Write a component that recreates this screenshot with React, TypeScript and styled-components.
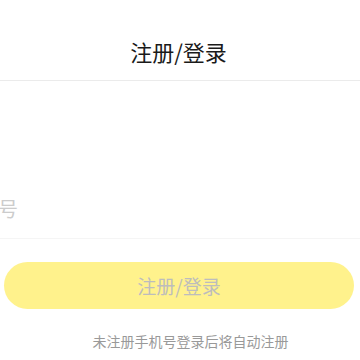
import React from "react";
import styled, { createGlobalStyle } from "styled-components";

const Global = createGlobalStyle`
  html, body { margin: 0; padding: 0; background: #ffffff; }
  body { font-family: "Noto Sans CJK SC", "Noto Sans", sans-serif; }
  * { box-sizing: border-box; }
`;

const Page = styled.div`
  width: 360px;
  height: 360px;
  overflow: hidden;
  display: flex;
  flex-direction: column;
`;

const Header = styled.header`
  height: 81px;
  padding-top: 31px;
  padding-right: 3px;
  border-bottom: 1px solid #ebebeb;
  text-align: center;
  font-size: 22px;
  line-height: 40px;
  color: #1a1a1a;
`;

const Form = styled.div`
  display: flex;
  flex-direction: column;
  padding-top: 97px;
`;

const InputRow = styled.div`
  height: 61px;
  border-bottom: 1px solid #f5f5f5;
  overflow: hidden;
  display: flex;
  align-items: center;
`;

const PhoneInput = styled.input`
  flex: none;
  width: 480px;
  margin-left: -102px;
  border: none;
  outline: none;
  background: transparent;
  padding: 0;
  height: 40px;
  font-family: "Noto Sans CJK SC", "Noto Sans", sans-serif;
  font-size: 20px;
  color: #333;
  &::placeholder { color: #cccccc; }
`;

const SubmitButton = styled.button`
  margin: 23px 6px 0 4px;
  height: 47px;
  border: none;
  border-radius: 24px;
  background: #fff28c;
  color: #bdbdbd;
  font-family: "Noto Sans CJK SC", "Noto Sans", sans-serif;
  font-size: 19px;
  padding: 0;
`;

const Note = styled.p`
  margin: 22px 0 0;
  text-align: center;
  font-size: 14px;
  line-height: 20px;
  color: #999999;
  padding-left: 21px;
`;

export default function App() {
  return (
    <Page>
      <Global />
      <Header>注册/登录</Header>
      <Form>
        <InputRow>
          <PhoneInput type="tel" placeholder="请输入手机号" />
        </InputRow>
        <SubmitButton>注册/登录</SubmitButton>
        <Note>未注册手机号登录后将自动注册</Note>
      </Form>
    </Page>
  );
}
